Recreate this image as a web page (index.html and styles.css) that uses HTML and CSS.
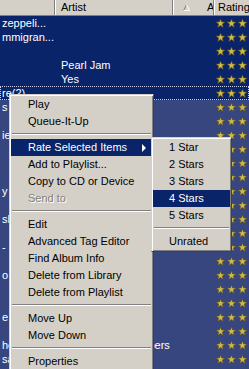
FILE: index.html
```html
<!DOCTYPE html>
<html lang="en">
<head>
<meta charset="UTF-8">
<title>Library</title>
<link rel="stylesheet" href="styles.css">
</head>
<body>
<svg width="0" height="0" class="defs">
    <symbol id="star" viewBox="0 0 10 10">
        <polygon points="5,0.3 6.29,3.22 9.7,3.45 7.09,5.68 7.94,9.3 5,7.3 2.06,9.3 2.91,5.68 0.3,3.45 3.71,3.22" fill="#cdb84a" stroke="#5e5320" stroke-width="0.7"/>
    </symbol>
</svg>

<div class="list">
    <div class="head">
        <div class="hcell c-title"></div>
        <div class="hcell c-artist">Artist</div>
        <div class="hcell c-album">
            <svg class="sort" width="7" height="7" viewBox="0 0 7 7">
                <path d="M3.5 0.5 L0.5 6.5" stroke="#808080" fill="none"/>
                <path d="M3.5 0.5 L6.5 6.5 L0.5 6.5" stroke="#ffffff" fill="none"/>
            </svg>
            <span class="htext">A</span>
        </div>
        <div class="hcell c-rating">Rating</div>
    </div>

    <div class="rows">
        <div class="row sel"><span class="c-title">zeppeli...</span><span class="c-artist"></span><span class="c-album"></span><span class="c-rating"><svg class="stars"><use href="#star" width="9" height="9"/><use href="#star" x="11" width="9" height="9"/><use href="#star" x="22" width="9" height="9"/></svg></span></div>
        <div class="row sel"><span class="c-title">mmigran...</span><span class="c-artist"></span><span class="c-album"></span><span class="c-rating"><svg class="stars"><use href="#star" width="9" height="9"/><use href="#star" x="11" width="9" height="9"/><use href="#star" x="22" width="9" height="9"/></svg></span></div>
        <div class="row sel"><span class="c-title"></span><span class="c-artist"></span><span class="c-album"></span><span class="c-rating"><svg class="stars"><use href="#star" width="9" height="9"/><use href="#star" x="11" width="9" height="9"/><use href="#star" x="22" width="9" height="9"/></svg></span></div>
        <div class="row sel"><span class="c-title"></span><span class="c-artist">Pearl Jam</span><span class="c-album"></span><span class="c-rating"><svg class="stars"><use href="#star" width="9" height="9"/><use href="#star" x="11" width="9" height="9"/><use href="#star" x="22" width="9" height="9"/></svg></span></div>
        <div class="row sel"><span class="c-title"></span><span class="c-artist">Yes</span><span class="c-album"></span><span class="c-rating"><svg class="stars"><use href="#star" width="9" height="9"/><use href="#star" x="11" width="9" height="9"/><use href="#star" x="22" width="9" height="9"/></svg></span></div>
        <div class="row sel focus"><span class="c-title">re(2)</span><span class="c-artist"></span><span class="c-album"></span><span class="c-rating"><svg class="stars"><use href="#star" width="9" height="9"/><use href="#star" x="11" width="9" height="9"/><use href="#star" x="22" width="9" height="9"/></svg></span></div>
        <div class="row"><span class="c-title">s -</span><span class="c-artist"></span><span class="c-album"></span><span class="c-rating"><svg class="stars"><use href="#star" width="9" height="9"/><use href="#star" x="11" width="9" height="9"/><use href="#star" x="22" width="9" height="9"/></svg></span></div>
        <div class="row"><span class="c-title"></span><span class="c-artist"></span><span class="c-album"></span><span class="c-rating"><svg class="stars"><use href="#star" width="9" height="9"/><use href="#star" x="11" width="9" height="9"/><use href="#star" x="22" width="9" height="9"/></svg></span></div>
        <div class="row"><span class="c-title">ie</span><span class="c-artist"></span><span class="c-album"></span><span class="c-rating"><svg class="stars"><use href="#star" width="9" height="9"/><use href="#star" x="11" width="9" height="9"/><use href="#star" x="22" width="9" height="9"/></svg></span></div>
        <div class="row"><span class="c-title"></span><span class="c-artist"></span><span class="c-album"></span><span class="c-rating"><svg class="stars"><use href="#star" width="9" height="9"/><use href="#star" x="11" width="9" height="9"/><use href="#star" x="22" width="9" height="9"/></svg></span></div>
        <div class="row"><span class="c-title"></span><span class="c-artist"></span><span class="c-album"></span><span class="c-rating"><svg class="stars"><use href="#star" width="9" height="9"/><use href="#star" x="11" width="9" height="9"/><use href="#star" x="22" width="9" height="9"/></svg></span></div>
        <div class="row"><span class="c-title"></span><span class="c-artist"></span><span class="c-album"></span><span class="c-rating"><svg class="stars"><use href="#star" width="9" height="9"/><use href="#star" x="11" width="9" height="9"/><use href="#star" x="22" width="9" height="9"/></svg></span></div>
        <div class="row"><span class="c-title">y -</span><span class="c-artist"></span><span class="c-album"></span><span class="c-rating"><svg class="stars"><use href="#star" width="9" height="9"/><use href="#star" x="11" width="9" height="9"/><use href="#star" x="22" width="9" height="9"/></svg></span></div>
        <div class="row"><span class="c-title"></span><span class="c-artist"></span><span class="c-album"></span><span class="c-rating"><svg class="stars"><use href="#star" width="9" height="9"/><use href="#star" x="11" width="9" height="9"/><use href="#star" x="22" width="9" height="9"/></svg></span></div>
        <div class="row"><span class="c-title">sh</span><span class="c-artist"></span><span class="c-album"></span><span class="c-rating"><svg class="stars"><use href="#star" width="9" height="9"/><use href="#star" x="11" width="9" height="9"/><use href="#star" x="22" width="9" height="9"/></svg></span></div>
        <div class="row"><span class="c-title"></span><span class="c-artist"></span><span class="c-album"></span><span class="c-rating"><svg class="stars"><use href="#star" width="9" height="9"/><use href="#star" x="11" width="9" height="9"/><use href="#star" x="22" width="9" height="9"/></svg></span></div>
        <div class="row"><span class="c-title">-</span><span class="c-artist"></span><span class="c-album"></span><span class="c-rating"><svg class="stars"><use href="#star" width="9" height="9"/><use href="#star" x="11" width="9" height="9"/><use href="#star" x="22" width="9" height="9"/></svg></span></div>
        <div class="row"><span class="c-title"></span><span class="c-artist"></span><span class="c-album"></span><span class="c-rating"><svg class="stars"><use href="#star" width="9" height="9"/><use href="#star" x="11" width="9" height="9"/><use href="#star" x="22" width="9" height="9"/></svg></span></div>
        <div class="row"><span class="c-title">o</span><span class="c-artist"></span><span class="c-album"></span><span class="c-rating"><svg class="stars"><use href="#star" width="9" height="9"/><use href="#star" x="11" width="9" height="9"/><use href="#star" x="22" width="9" height="9"/></svg></span></div>
        <div class="row"><span class="c-title"></span><span class="c-artist"></span><span class="c-album"></span><span class="c-rating"><svg class="stars"><use href="#star" width="9" height="9"/><use href="#star" x="11" width="9" height="9"/><use href="#star" x="22" width="9" height="9"/></svg></span></div>
        <div class="row"><span class="c-title"></span><span class="c-artist"></span><span class="c-album"></span><span class="c-rating"><svg class="stars"><use href="#star" width="9" height="9"/><use href="#star" x="11" width="9" height="9"/><use href="#star" x="22" width="9" height="9"/></svg></span></div>
        <div class="row"><span class="c-title">e</span><span class="c-artist"></span><span class="c-album"></span><span class="c-rating"><svg class="stars"><use href="#star" width="9" height="9"/><use href="#star" x="11" width="9" height="9"/><use href="#star" x="22" width="9" height="9"/></svg></span></div>
        <div class="row"><span class="c-title"></span><span class="c-artist"></span><span class="c-album"></span><span class="c-rating"><svg class="stars"><use href="#star" width="9" height="9"/><use href="#star" x="11" width="9" height="9"/><use href="#star" x="22" width="9" height="9"/></svg></span></div>
        <div class="row"><span class="c-title">he</span><span class="c-artist">Red Hot Chili Peppers</span><span class="c-album"></span><span class="c-rating"><svg class="stars"><use href="#star" width="9" height="9"/><use href="#star" x="11" width="9" height="9"/><use href="#star" x="22" width="9" height="9"/></svg></span></div>
        <div class="row"><span class="c-title">sa</span><span class="c-artist"></span><span class="c-album"></span><span class="c-rating"><svg class="stars"><use href="#star" width="9" height="9"/><use href="#star" x="11" width="9" height="9"/><use href="#star" x="22" width="9" height="9"/></svg></span></div>
        <div class="row"><span class="c-title"></span><span class="c-artist"></span><span class="c-album"></span><span class="c-rating"><svg class="stars"><use href="#star" width="9" height="9"/><use href="#star" x="11" width="9" height="9"/><use href="#star" x="22" width="9" height="9"/></svg></span></div>
    </div>
</div>

<!-- context menu -->
<div class="menu main-menu">
    <div class="item">Play</div>
    <div class="item">Queue-It-Up</div>
    <div class="sep"></div>
    <div class="item hot">Rate Selected Items<span class="arrow"></span></div>
    <div class="item">Add to Playlist...</div>
    <div class="item">Copy to CD or Device</div>
    <div class="item off">Send to</div>
    <div class="sep"></div>
    <div class="item">Edit</div>
    <div class="item">Advanced Tag Editor</div>
    <div class="item">Find Album Info</div>
    <div class="item">Delete from Library</div>
    <div class="item">Delete from Playlist</div>
    <div class="sep"></div>
    <div class="item">Move Up</div>
    <div class="item">Move Down</div>
    <div class="sep"></div>
    <div class="item">Properties</div>
</div>

<div class="menu sub-menu">
    <div class="item">1 Star</div>
    <div class="item">2 Stars</div>
    <div class="item">3 Stars</div>
    <div class="item hot">4 Stars</div>
    <div class="item">5 Stars</div>
    <div class="sep"></div>
    <div class="item">Unrated</div>
</div>
</body>
</html>
```

FILE: styles.css
```css
* {
    box-sizing: border-box;
}

body {
    margin: 0;
    width: 249px;
    height: 369px;
    overflow: hidden;
    position: relative;
    font-family: "Liberation Sans", Arial, sans-serif;
    font-size: 11px;
    background-color: #37467f;
}

.defs {
    position: absolute;
}

/* list header */
.head {
    display: flex;
    height: 16px;
    background-color: #d4d0c8;
    color: #000;
    border-bottom: 1px solid #808080;
}

.hcell {
    height: 15px;
    line-height: 15px;
    border-left: 1px solid #ffffff;
    border-right: 1px solid #808080;
    overflow: hidden;
    white-space: nowrap;
    display: flex;
    align-items: center;
}

.head .c-title {
    border-left: 0;
}

.head .c-artist {
    padding-left: 5px;
}

.head .c-album {
    padding-left: 9px;
}

.sort {
    flex-shrink: 0;
}

.htext {
    margin-left: 17px;
}

.head .c-rating {
    flex: 1;
    padding-left: 3px;
    border-right: 0;
}

/* columns */
.c-title {
    width: 55px;
    flex-shrink: 0;
}

.c-artist {
    width: 118px;
    flex-shrink: 0;
}

.c-album {
    width: 41px;
    flex-shrink: 0;
}

.row {
    display: flex;
    height: 14px;
    line-height: 14px;
    color: #ffffff;
    white-space: nowrap;
}

.row.sel {
    background-color: #0a246a;
}

.row.focus {
    outline: 1px dotted #c8cce8;
    outline-offset: -1px;
}

.row .c-title {
    padding-left: 2px;
    overflow: hidden;
}

.row .c-artist {
    padding-left: 6px;
}

.row .c-rating {
    padding-left: 2px;
    display: flex;
    align-items: center;
}

.stars {
    width: 31px;
    height: 9px;
    display: block;
}

/* popup menus */
.menu {
    position: absolute;
    background-color: #d4d0c8;
    border: 1px solid;
    border-color: #d4d0c8 #404040 #404040 #d4d0c8;
    box-shadow: inset 1px 1px #ffffff, inset -1px -1px #808080;
    padding: 1px;
    color: #000;
}

.main-menu {
    left: 9px;
    top: 94px;
    width: 145px;
}

.sub-menu {
    left: 151px;
    top: 137px;
    width: 81px;
}

.item {
    height: 17px;
    line-height: 17px;
    padding-left: 17px;
    display: flex;
    align-items: center;
    white-space: nowrap;
}

.sub-menu .item {
    padding-left: 16px;
}

.item.hot {
    background-color: #0a246a;
    color: #ffffff;
}

.item.off {
    color: #808080;
    text-shadow: 1px 1px #ffffff;
}

.arrow {
    margin-left: auto;
    margin-right: 6px;
    border-left: 4px solid #000;
    border-top: 4px solid transparent;
    border-bottom: 4px solid transparent;
}

.hot .arrow {
    border-left-color: #ffffff;
}

.sep {
    height: 9px;
    padding: 3px 1px 0;
}

.sep::before {
    content: "";
    display: block;
    border-top: 1px solid #808080;
    border-bottom: 1px solid #ffffff;
}
```
